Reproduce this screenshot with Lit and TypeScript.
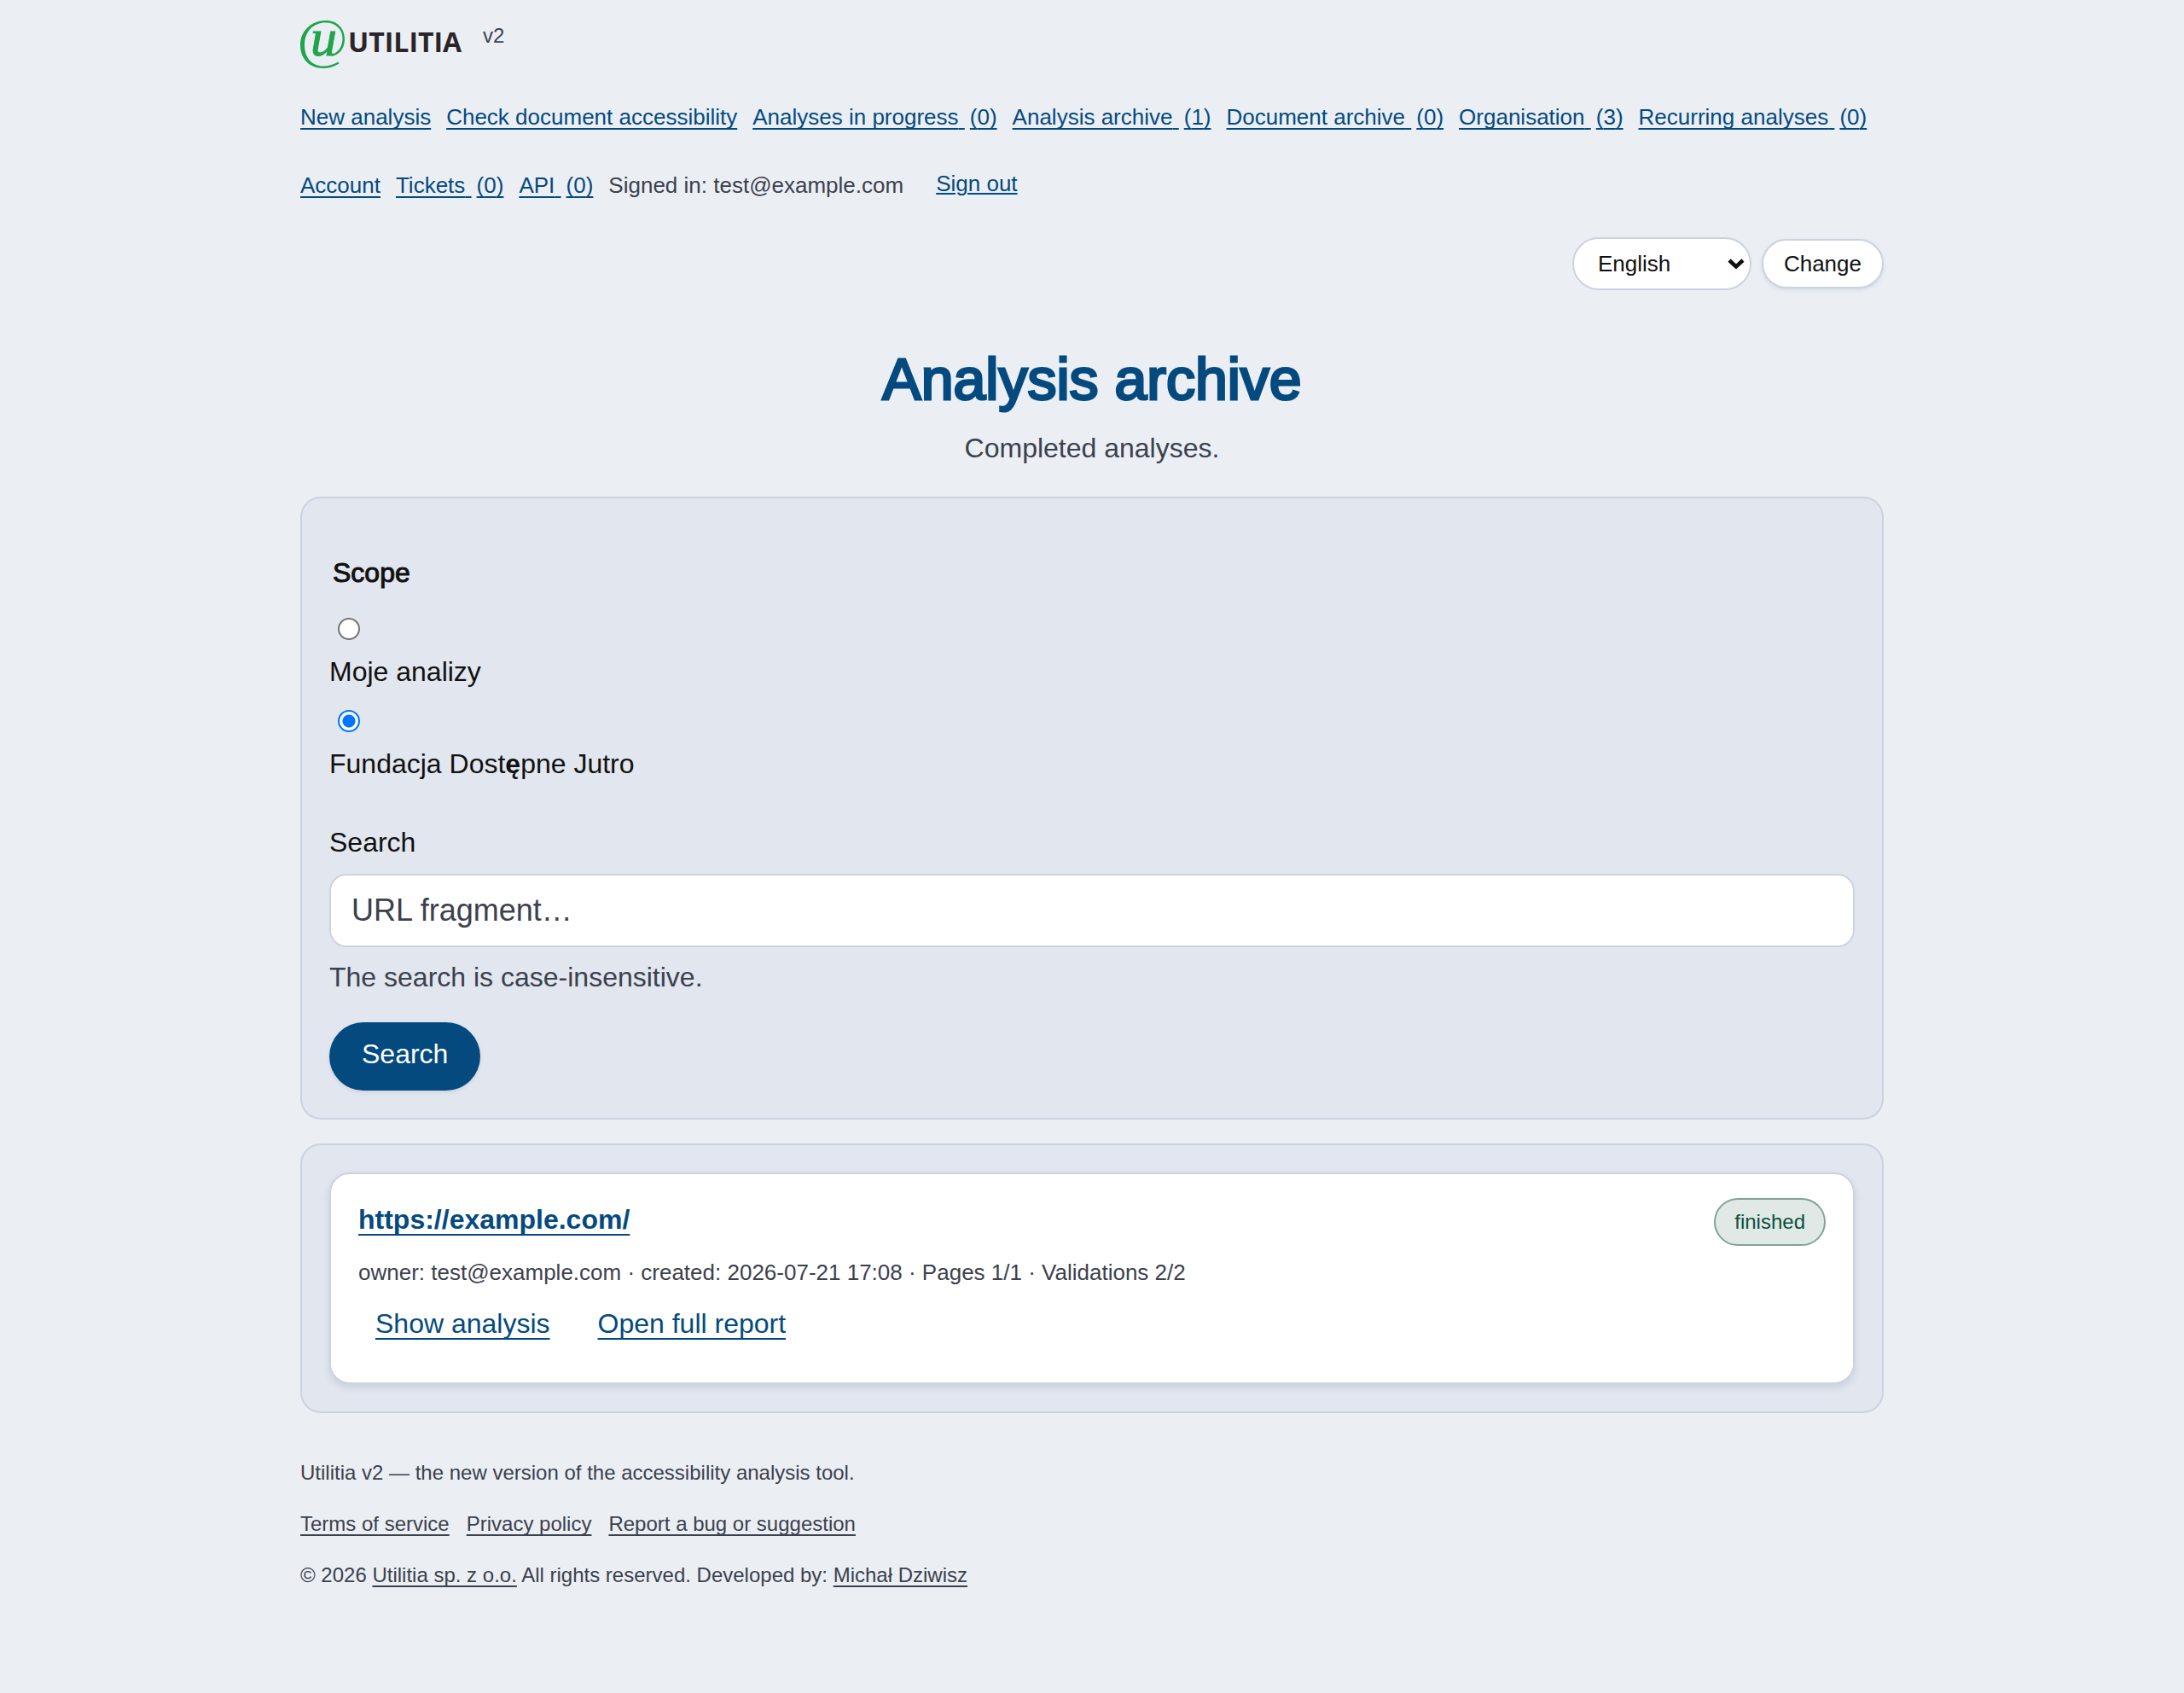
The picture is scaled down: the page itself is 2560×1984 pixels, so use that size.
import { LitElement, html, css, svg, nothing } from "lit";
import { customElement, property, state } from "lit/decorators.js";

interface NavItem {
  label: string;
  count?: number;
}

interface Analysis {
  url: string;
  status: string;
  owner: string;
  created: string;
  pages: string;
  validations: string;
}

const NAV: NavItem[] = [
  { label: "New analysis" },
  { label: "Check document accessibility" },
  { label: "Analyses in progress", count: 0 },
  { label: "Analysis archive", count: 1 },
  { label: "Document archive", count: 0 },
  { label: "Organisation", count: 3 },
  { label: "Recurring analyses", count: 0 },
  { label: "Account" },
  { label: "Tickets", count: 0 },
  { label: "API", count: 0 },
];

const SCOPES = [html`Moje analizy`, html`Fundacja Dost<b>ę</b>pne Jutro`];

const ANALYSES: Analysis[] = [
  {
    url: "https://example.com/",
    status: "finished",
    owner: "test@example.com",
    created: "2026-07-21 17:08",
    pages: "1/1",
    validations: "2/2",
  },
];

const base = css`
  :host {
    display: block;
  }
  *,
  *::before,
  *::after {
    box-sizing: border-box;
  }
  a {
    color: var(--brand);
    text-decoration: underline;
    text-decoration-thickness: 2px;
    text-underline-offset: 4px;
    text-decoration-skip-ink: none;
  }
  button,
  input,
  select {
    font-family: inherit;
    color: inherit;
    margin: 0;
  }
`;

@customElement("site-header")
export class SiteHeader extends LitElement {
  static styles = [
    base,
    css`
      .brand {
        display: flex;
        align-items: flex-start;
        gap: 18px;
        padding-top: 24px;
      }
      .logo {
        display: block;
        width: 196px;
        height: 56px;
        overflow: visible;
      }
      .version {
        font-size: 24px;
        line-height: 36px;
        color: var(--muted);
      }
      .nav {
        display: flex;
        flex-wrap: wrap;
        align-items: center;
        column-gap: 18px;
        margin-top: 17px;
        font-size: 26px;
        line-height: 80px;
      }
      .item {
        display: inline-flex;
        gap: 6px;
        text-decoration: none;
        white-space: nowrap;
      }
      .part {
        text-decoration: underline;
        text-decoration-thickness: 2px;
        text-underline-offset: 4px;
        text-decoration-skip-ink: none;
      }
      .user {
        color: var(--muted);
      }
      .signout {
        border: 0;
        background: none;
        padding: 0 20px 4px;
        font-size: 26px;
        line-height: 40px;
        color: var(--brand);
        text-decoration: underline;
        text-decoration-thickness: 2px;
        text-underline-offset: 2px;
      }
      .language {
        display: flex;
        justify-content: flex-end;
        align-items: center;
        gap: 12px;
        margin-top: 21px;
        font-size: 26px;
      }
      .picker {
        display: grid;
        align-items: center;
      }
      .select {
        grid-area: 1 / 1;
        appearance: none;
        width: 210px;
        height: 62px;
        padding: 0 28px;
        border: 2px solid var(--line);
        border-radius: 31px;
        background: #fff;
        font-size: 26px;
      }
      .chevron {
        grid-area: 1 / 1;
        justify-self: end;
        width: 20px;
        height: 14px;
        margin-right: 8px;
        pointer-events: none;
      }
      .change {
        height: 58px;
        padding: 0 24px;
        border: 2px solid var(--line);
        border-radius: 29px;
        background: #fff;
        box-shadow: 0 2px 4px rgba(30, 50, 90, 0.1);
        font-size: 26px;
      }
      .word {
        font: 700 32px "Open Sans", sans-serif;
        fill: #2b2529;
      }
      .letter {
        font: italic 400 62px "Liberation Serif", serif;
        fill: #1fa54b;
        stroke: #1fa54b;
        stroke-width: 1px;
      }
    `,
  ];

  private logo() {
    return html`<svg class="logo" viewBox="0 0 196 56" role="img" aria-label="Utilitia">
      ${svg`
        <path fill="#1fa54b" d="M45.500 50.500C39 54.500 33 56 27 56C11 56 0 45 0 29C0 12 13 0 30 0C43 0 52 9 52 22C52 33 45 41.500 36 41.500L37 39.500C44 38 49.500 31 49.500 21C49.500 10 41 2.500 30 2.500C15 2.500 5 13 5 29C5 44 14 53.500 27 53.500C33 53.500 38 52 44.500 48.500Z"/>
        <text class="letter" x="12" y="41">u</text>
        <text class="word" x="56" y="37">UTILITIA</text>`}
    </svg>`;
  }

  render() {
    return html`
      <header>
        <div class="brand">${this.logo()}<span class="version">v2</span></div>
        <nav class="nav" aria-label="Main">
          ${NAV.map(
            (item) => html`<a class="item" href="#"
              ><span class="part">${item.label}${item.count === undefined ? nothing : "\u00a0"}</span
              >${item.count === undefined ? nothing : html`<span class="part">(${item.count})</span>`}</a
            >`,
          )}
          <span class="user">Signed in: test@example.com</span>
          <button class="signout" type="button">Sign out</button>
        </nav>
        <form class="language" @submit=${(e: Event) => e.preventDefault()}>
          <div class="picker">
            <select class="select" aria-label="Language">
              <option>English</option>
              <option>Polski</option>
            </select>
            <svg class="chevron" viewBox="0 0 20 14" aria-hidden="true">
              <path d="M2 3L10 10.500L18 3" fill="none" stroke="#111" stroke-width="4.500" />
            </svg>
          </div>
          <button class="change">Change</button>
        </form>
      </header>
    `;
  }
}

@customElement("archive-search")
export class ArchiveSearch extends LitElement {
  @state() private scope = 1;

  static styles = [
    base,
    css`
      .panel {
        padding: 32px;
        border: 2px solid var(--line);
        border-radius: 24px;
        background: var(--panel);
      }
      .scope {
        margin: 0;
        padding: 31px 0 0;
        border: 0;
        min-width: 0;
      }
      .legend {
        float: left;
        width: 100%;
        padding: 0 4px;
        -webkit-text-stroke: 1px currentColor;
      }
      .options {
        clear: both;
        padding-top: 8px;
      }
      .option {
        display: flex;
        flex-direction: column;
        align-items: flex-start;
        gap: 13px;
        padding-top: 21px;
      }
      .radio {
        appearance: none;
        width: 26px;
        height: 26px;
        margin-left: 10px;
        border: 2px solid #767676;
        border-radius: 50%;
        background: #fff;
      }
      .radio:checked {
        border-color: #0075ff;
        background: radial-gradient(circle, #0075ff 0 7px, #fff 8px);
      }
      .label {
        display: block;
        margin-top: 44px;
      }
      .query {
        display: block;
        width: 100%;
        height: 86px;
        margin-top: 13px;
        padding: 0 24px;
        border: 2px solid var(--line);
        border-radius: 20px;
        background: #fff;
        font-size: 36px;
      }
      .query::placeholder {
        color: var(--muted);
        opacity: 1;
      }
      .help {
        margin: 11px 0 0;
        color: var(--muted);
      }
      .submit {
        display: block;
        height: 80px;
        margin-top: 29px;
        padding: 0 38px 6px;
        border: 0;
        border-radius: 40px;
        background: var(--brand);
        box-shadow: 0 2px 4px rgba(30, 50, 90, 0.1);
        color: #fff;
        font-size: 32px;
      }
    `,
  ];

  render() {
    return html`
      <form class="panel" @submit=${(e: Event) => e.preventDefault()}>
        <fieldset class="scope">
          <legend class="legend">Scope</legend>
          <div class="options">
            ${SCOPES.map(
              (name, i) => html`<div class="option">
                <input
                  class="radio"
                  type="radio"
                  name="scope"
                  id="scope-${i}"
                  .checked=${i === this.scope}
                  @change=${() => (this.scope = i)}
                />
                <label for="scope-${i}">${name}</label>
              </div>`,
            )}
          </div>
        </fieldset>
        <label class="label" for="query">Search</label>
        <input class="query" id="query" type="text" placeholder="URL fragment…" aria-describedby="help" />
        <p class="help" id="help">The search is case-insensitive.</p>
        <button class="submit">Search</button>
      </form>
    `;
  }
}

@customElement("analysis-card")
export class AnalysisCard extends LitElement {
  @property({ attribute: false }) analysis!: Analysis;

  static styles = [
    base,
    css`
      .card {
        padding: 28px 32px;
        border: 2px solid var(--line);
        border-radius: 24px;
        background: #fff;
        box-shadow: 0 4px 8px rgba(30, 50, 90, 0.12);
      }
      .head {
        display: flex;
        justify-content: space-between;
        align-items: flex-start;
      }
      .title {
        margin: 0;
        font-size: 32px;
        line-height: 50px;
      }
      .title a,
      .actions a {
        text-underline-offset: 6px;
      }
      .badge {
        padding: 0 22px;
        border: 2px solid #7fa49a;
        border-radius: 28px;
        background: #e0e9e6;
        color: #0b5040;
        font-size: 24px;
        line-height: 52px;
      }
      .meta {
        margin: 11px 0 0;
        color: var(--muted);
        font-size: 26px;
        line-height: 40px;
      }
      .actions {
        display: flex;
        gap: 56px;
        margin: 16px 20px 17px;
      }
    `,
  ];

  render() {
    const a = this.analysis;
    return html`
      <article class="card">
        <div class="head">
          <h2 class="title"><a href="#">${a.url}</a></h2>
          <span class="badge">${a.status}</span>
        </div>
        <p class="meta">
          owner: ${a.owner} · created: ${a.created} · Pages ${a.pages} · Validations ${a.validations}
        </p>
        <div class="actions">
          <a href="#">Show analysis</a>
          <a href="#">Open full report</a>
        </div>
      </article>
    `;
  }
}

@customElement("site-footer")
export class SiteFooter extends LitElement {
  static styles = [
    base,
    css`
      .footer {
        display: flex;
        flex-direction: column;
        gap: 24px;
        padding: 52px 0;
        color: var(--muted);
        font-size: 24px;
        line-height: 36px;
      }
      .line {
        margin: 0;
      }
      .links {
        display: flex;
        flex-wrap: wrap;
        gap: 20px;
      }
      a {
        color: inherit;
      }
    `,
  ];

  render() {
    return html`
      <footer class="footer">
        <p class="line">Utilitia v2 — the new version of the accessibility analysis tool.</p>
        <nav class="links" aria-label="Footer">
          <a href="#">Terms of service</a>
          <a href="#">Privacy policy</a>
          <a href="#">Report a bug or suggestion</a>
        </nav>
        <p class="line">
          © 2026 <a href="#">Utilitia sp. z o.o.</a> All rights reserved. Developed by:
          <a href="#">Michał Dziwisz</a>
        </p>
      </footer>
    `;
  }
}

@customElement("app-root")
export class AppRoot extends LitElement {
  static styles = [
    base,
    css`
      :host {
        --brand: #044a7f;
        --muted: #3b414d;
        --line: #ccd3e0;
        --panel: #e1e6ef;
        min-height: 100vh;
        background: #ebeff4;
        color: #111;
        font-family: "Liberation Sans", Arial, sans-serif;
        font-size: 32px;
        line-height: 48px;
      }
      .page {
        width: calc(100% - 64px);
        max-width: 1856px;
        margin: 0 auto;
      }
      .intro {
        margin: 64px 0 33px;
        text-align: center;
      }
      .heading {
        margin: 0;
        color: var(--brand);
        font-size: 68px;
        font-weight: 400;
        line-height: 80px;
        -webkit-text-stroke: 3px currentColor;
      }
      .lead {
        margin: 17px 0 0;
        color: var(--muted);
      }
      .results {
        display: grid;
        gap: 24px;
        margin-top: 28px;
        padding: 32px;
        border: 2px solid var(--line);
        border-radius: 24px;
        background: var(--panel);
      }
    `,
  ];

  render() {
    return html`
      <div class="page">
        <site-header></site-header>
        <main>
          <div class="intro">
            <h1 class="heading">Analysis archive</h1>
            <p class="lead">Completed analyses.</p>
          </div>
          <archive-search></archive-search>
          <section class="results" aria-label="Results">
            ${ANALYSES.map((a) => html`<analysis-card .analysis=${a}></analysis-card>`)}
          </section>
        </main>
        <site-footer></site-footer>
      </div>
    `;
  }
}
